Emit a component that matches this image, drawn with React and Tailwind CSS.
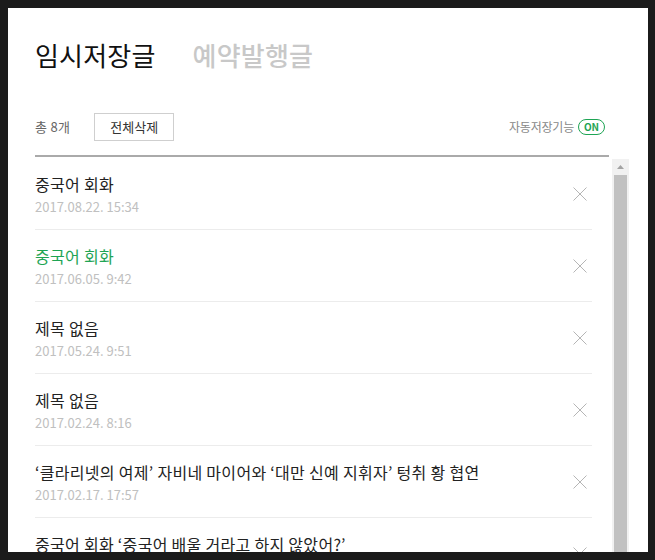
/**
 * App — "임시저장글" drafts dialog with a list of saved posts and a fake scrollbar.
 */

const DRAFTS = [
  { title: '중국어 회화', date: '2017.08.22. 15:34' },
  { title: '중국어 회화', date: '2017.06.05. 9:42', active: true },
  { title: '제목 없음', date: '2017.05.24. 9:51' },
  { title: '제목 없음', date: '2017.02.24. 8:16' },
  {
    title: '‘클라리넷의 여제’ 자비네 마이어와 ‘대만 신예 지휘자’ 텅취 황 협연',
    date: '2017.02.17. 17:57',
  },
  { title: '중국어 회화 ‘중국어 배울 거라고 하지 않았어?’', date: '2017.01.30. 11:20' },
]

function CloseIcon() {
  return (
    <svg width="14" height="14" viewBox="0 0 14 14" className="shrink-0">
      <path d="M0.5 0.5 L13.5 13.5 M13.5 0.5 L0.5 13.5" stroke="#b5b5b5" strokeWidth="1" fill="none" />
    </svg>
  )
}

function DraftRow({ title, date, active }) {
  return (
    <div className="relative border-b border-[#ececec] h-[72px] pt-[16px] pr-[5px]">
      <div className="flex flex-col">
        <span
          className={`text-[16px] leading-[20px] tracking-[0.3px] whitespace-nowrap ${
            active ? 'text-[#1ea454]' : 'text-[#222]'
          }`}
        >
          {title}
        </span>
        <span className="text-[13px] leading-[20px] mt-[3px] text-[#c0c0c0]">{date}</span>
      </div>
      <div className="absolute right-[5px] top-[29px]">
        <CloseIcon />
      </div>
    </div>
  )
}

export default function App() {
  return (
    <div
      className="w-[655px] h-[560px] bg-[#1b1b1b] pt-[8px] pl-[8px] pr-[7px] overflow-hidden"
      style={{ fontFamily: '"Noto Sans CJK KR", "Noto Sans", sans-serif' }}
    >
      <div className="bg-white h-[544px] overflow-hidden pl-[27px] flex flex-col">
        {/* Tabs */}
        <div className="flex items-center gap-[37px] pt-[31px] h-[63px]">
          <span className="text-[26px] leading-[32px] tracking-[0.2px] text-[#111]">임시저장글</span>
          <span className="text-[26px] leading-[32px] tracking-[0.2px] font-medium text-[#c8c8c8]">예약발행글</span>
        </div>

        {/* Toolbar */}
        <div className="flex items-center justify-between h-[28px] mt-[42px] w-[574px] pr-[4px]">
          <div className="flex items-center">
            <span className="text-[13px] text-[#666] tracking-[0.3px]">총 8개</span>
            <button className="ml-[24px] h-[28px] w-[80px] border border-[#cfcfcf] text-[13px] text-[#333] bg-white">
              전체삭제
            </button>
          </div>
          <div className="flex items-center gap-[4px]">
            <span className="text-[12px] text-[#888] tracking-[-0.2px]">자동저장기능</span>
            <span className="h-[16px] w-[27px] rounded-full border border-[#1ea454] text-[#1ea454] text-[10px] font-bold flex items-center justify-center leading-none">
              ON
            </span>
          </div>
        </div>

        {/* List + scrollbar */}
        <div className="flex mt-[14px] flex-1 min-h-0">
          <div className="w-[574px] flex flex-col">
            <div className="h-[2px] bg-[#aaaaaa] shrink-0" />
            <div className="w-[557px] mt-[1px]">
              {DRAFTS.map((d, i) => (
                <DraftRow key={i} {...d} />
              ))}
            </div>
          </div>
          <div className="ml-[3px] mt-[4px] w-[17px] bg-[#f1f1f1] flex flex-col items-center">
            <div className="h-[16px] flex items-center justify-center">
              <svg width="7" height="4" viewBox="0 0 7 4">
                <path d="M3.5 0 L7 4 L0 4 Z" fill="#a3a3a3" />
              </svg>
            </div>
            <div className="w-[13px] flex-1 bg-[#c1c1c1]" />
          </div>
        </div>
      </div>
    </div>
  )
}
